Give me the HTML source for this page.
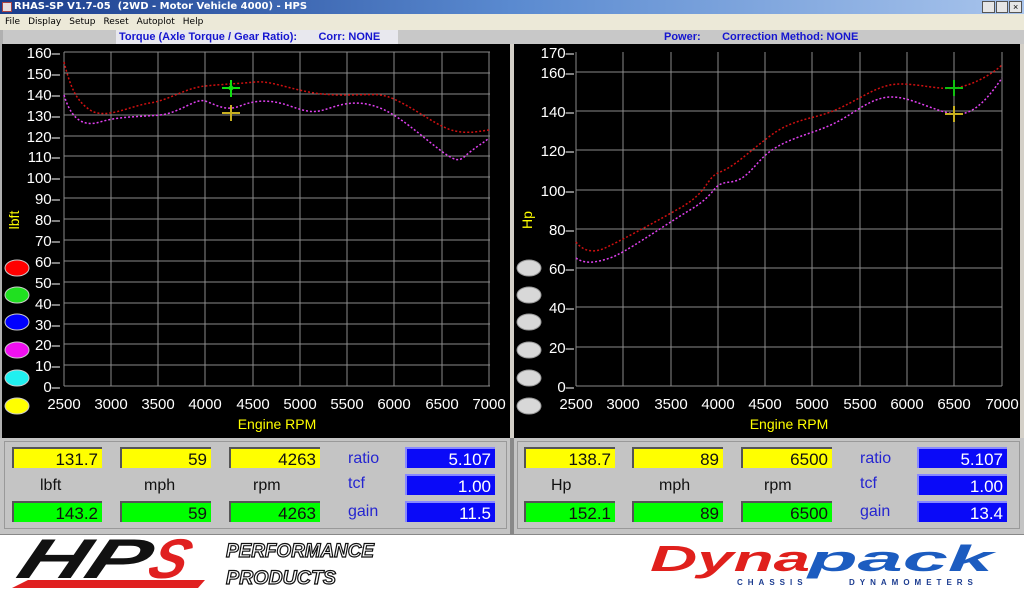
<!DOCTYPE html>
<html><head><meta charset="utf-8"><style>
*{margin:0;padding:0;box-sizing:border-box}
body{width:1024px;height:592px;overflow:hidden;background:#d4d0c8;font-family:"Liberation Sans",sans-serif;position:relative}
.a{position:absolute}
.title{left:0;top:0;width:1024px;height:14px;background:linear-gradient(90deg,#1a3c8c,#5a8ad0 50%,#a8c4ec);color:#fff;font:bold 10px "DejaVu Sans",sans-serif;line-height:14px;padding-left:14px}
.menu{left:0;top:14px;width:1024px;height:16px;background:#ece9d8;font:9px "DejaVu Sans",sans-serif;line-height:16px}
.menu span{margin-left:5px;margin-right:3px}
.hdr{top:30px;height:14px;font:bold 11px "Liberation Sans",sans-serif;color:#1515d0;line-height:14px;background:#e8e8ee;white-space:nowrap}
.box{position:absolute;height:21px;font-size:17px;text-align:right;padding-right:4px;line-height:21px;color:#111;border-top:2px solid #555;border-left:2px solid #555}
.y{background:#ffff00}.g{background:#00ff00}.b{background:#0a0af8;color:#fff;border-color:#88f}
.lb{position:absolute;font-size:16px;color:#111}
.bl{position:absolute;font-size:16px;color:#2525d0}
</style></head><body>
<div class="a title">RHAS-SP V1.7-05 &nbsp;(2WD - Motor Vehicle 4000) - HPS</div>
<div class="a" style="left:2px;top:2px;width:10px;height:10px;background:#e8e0e0;border:1px solid #a44"></div>
<div class="a" style="left:982px;top:1px;width:40px;height:12px;display:flex;gap:1px"><div style="flex:1;background:#e6e6e6;border:1px solid #555"></div><div style="flex:1;background:#e6e6e6;border:1px solid #555"></div><div style="flex:1;background:#e6e6e6;border:1px solid #555;font-size:9px;line-height:10px;text-align:center">×</div></div>
<div class="a menu"><span>File</span><span>Display</span><span>Setup</span><span>Reset</span><span>Autoplot</span><span>Help</span></div>
<div class="a" style="left:0;top:30px;width:1024px;height:14px;background:#c8c8c8"></div>
<div class="a hdr" style="left:116px;width:282px;padding-left:3px">Torque (Axle Torque / Gear Ratio): &nbsp; &nbsp; &nbsp; Corr: NONE</div>
<div class="a hdr" style="left:664px;width:210px;background:none">Power: &nbsp; &nbsp; &nbsp; Correction Method: NONE</div>
<div class="a" style="left:0;top:30px;width:3px;height:410px;background:#b0b0b0"></div>
<svg class="a" style="left:0;top:0" width="1024" height="440" font-family="Liberation Sans" font-size="15">
<rect x="2" y="44" width="508" height="394" fill="#000"/>
<rect x="514" y="44" width="506" height="394" fill="#000"/>
<g stroke="#8a8a8a" stroke-width="1">
<path d="M64 386V52M111 386V52M158 386V52M205 386V52M253 386V52M300 386V52M347 386V52M394 386V52M442 386V52M489 386V52"/>
<path d="M64 52H490M64 73H490M64 94H490M64 115H490M64 136H490M64 156H490M64 177H490M64 198H490M64 219H490M64 240H490M64 261H490M64 282H490M64 303H490M64 324H490M64 344H490M64 365H490M64 386H490"/>
<path d="M576 386V52M623 386V52M671 386V52M718 386V52M765 386V52M812 386V52M860 386V52M907 386V52M954 386V52M1002 386V52"/>
<path d="M576 72H1002M576 111H1002M576 150H1002M576 190H1002M576 229H1002M576 268H1002M576 307H1002M576 347H1002M576 386H1002"/>
</g>
<g fill="#fff" text-anchor="end">
<text x="60" y="58">160–</text><text x="60" y="79">150–</text><text x="60" y="100">140–</text><text x="60" y="121">130–</text><text x="60" y="142">120–</text><text x="60" y="162">110–</text><text x="60" y="183">100–</text><text x="60" y="204">90–</text><text x="60" y="225">80–</text><text x="60" y="246">70–</text><text x="60" y="267">60–</text><text x="60" y="288">50–</text><text x="60" y="309">40–</text><text x="60" y="330">30–</text><text x="60" y="350">20–</text><text x="60" y="371">10–</text><text x="60" y="392">0–</text>
<text x="574" y="58">170–</text><text x="574" y="78">160–</text><text x="574" y="117">140–</text><text x="574" y="156">120–</text><text x="574" y="196">100–</text><text x="574" y="235">80–</text><text x="574" y="274">60–</text><text x="574" y="313">40–</text><text x="574" y="353">20–</text><text x="574" y="392">0–</text>
</g>
<g fill="#fff" text-anchor="middle">
<text x="64" y="409">2500</text><text x="111" y="409">3000</text><text x="158" y="409">3500</text><text x="205" y="409">4000</text><text x="253" y="409">4500</text><text x="300" y="409">5000</text><text x="347" y="409">5500</text><text x="394" y="409">6000</text><text x="442" y="409">6500</text><text x="489" y="409">7000</text>
<text x="576" y="409">2500</text><text x="623" y="409">3000</text><text x="671" y="409">3500</text><text x="718" y="409">4000</text><text x="765" y="409">4500</text><text x="812" y="409">5000</text><text x="860" y="409">5500</text><text x="907" y="409">6000</text><text x="954" y="409">6500</text><text x="1002" y="409">7000</text>
</g>
<g fill="#ffff00" font-size="14" text-anchor="middle">
<text x="277" y="429">Engine RPM</text><text x="789" y="429">Engine RPM</text>
<text transform="translate(19,220) rotate(-90)">lbft</text>
<text transform="translate(532,220) rotate(-90)">Hp</text>
</g>
<g fill="none" stroke-width="1.5" stroke-dasharray="2 2">
<path stroke="#d01010" d="M64 62C70 85 75 100 90 110S130 106 150 103S185 88 205 86S235 84 255 82S300 95 340 95S380 92 400 102S440 128 455 131S480 131 489 130"/>
<path stroke="#e040f0" d="M64 95C70 115 80 128 100 122S140 117 160 115S195 98 205 101S225 112 240 106S270 99 290 106S315 113 330 108S360 100 380 108S420 135 440 150S460 160 470 152S485 142 489 138"/>
<path stroke="#d01010" d="M576 242C582 250 592 254 605 248S650 225 680 208S705 178 720 172S745 155 770 136S815 120 840 108S880 84 900 84S940 90 955 88S990 76 1002 65"/>
<path stroke="#e040f0" d="M576 258C584 264 595 263 610 258S660 228 690 210S710 184 730 182S755 160 775 148S815 133 835 123S870 98 890 97S935 112 955 114S990 95 1002 78"/>
</g>
<g stroke-width="2">
<path stroke="#10e010" d="M231 80V97M222 88H240"/><circle cx="231" cy="88" r="2" fill="none" stroke="#10e010" stroke-width="1"/>
<path stroke="#c8b020" d="M231 105V121M222 113H240"/>
<path stroke="#10c010" d="M954 80V96M945 88H963"/>
<path stroke="#c8b020" d="M954 106V122M945 114H963"/>
</g>
<g stroke="#ccc" stroke-width="1">
<ellipse cx="17" cy="268" rx="12" ry="8" fill="#ff0000"/><ellipse cx="17" cy="295" rx="12" ry="8" fill="#20e020"/><ellipse cx="17" cy="322" rx="12" ry="8" fill="#0000ff"/><ellipse cx="17" cy="350" rx="12" ry="8" fill="#f010f0"/><ellipse cx="17" cy="378" rx="12" ry="8" fill="#20f0f0"/><ellipse cx="17" cy="406" rx="12" ry="8" fill="#ffff00"/>
</g>
<g fill="#d8d8d8" stroke="#999" stroke-width="1">
<ellipse cx="529" cy="268" rx="12" ry="8"/><ellipse cx="529" cy="295" rx="12" ry="8"/><ellipse cx="529" cy="322" rx="12" ry="8"/><ellipse cx="529" cy="350" rx="12" ry="8"/><ellipse cx="529" cy="378" rx="12" ry="8"/><ellipse cx="529" cy="406" rx="12" ry="8"/>
</g>
</svg>
<div class="a" style="left:0;top:438px;width:1024px;height:96px;background:#c4c4c4"></div>
<div class="a" style="left:4px;top:441px;width:503px;height:88px;border:1px solid #999"></div>
<div class="a" style="left:517px;top:441px;width:503px;height:88px;border:1px solid #999"></div>
<div class="a" style="left:510px;top:438px;width:4px;height:96px;background:#888"></div>

<div class="box y" style="left:12px;top:447px;width:90px">131.7</div>
<div class="box y" style="left:120px;top:447px;width:91px">59</div>
<div class="box y" style="left:229px;top:447px;width:91px">4263</div>
<div class="bl" style="left:348px;top:450px">ratio</div>
<div class="box b" style="left:405px;top:447px;width:90px">5.107</div>
<div class="lb" style="left:40px;top:477px">lbft</div>
<div class="lb" style="left:144px;top:477px">mph</div>
<div class="lb" style="left:253px;top:477px">rpm</div>
<div class="bl" style="left:348px;top:475px">tcf</div>
<div class="box b" style="left:405px;top:474px;width:90px">1.00</div>
<div class="box g" style="left:12px;top:501px;width:90px">143.2</div>
<div class="box g" style="left:120px;top:501px;width:91px">59</div>
<div class="box g" style="left:229px;top:501px;width:91px">4263</div>
<div class="bl" style="left:348px;top:503px">gain</div>
<div class="box b" style="left:405px;top:501px;width:90px">11.5</div>

<div class="box y" style="left:524px;top:447px;width:91px">138.7</div>
<div class="box y" style="left:632px;top:447px;width:91px">89</div>
<div class="box y" style="left:741px;top:447px;width:91px">6500</div>
<div class="bl" style="left:860px;top:450px">ratio</div>
<div class="box b" style="left:917px;top:447px;width:90px">5.107</div>
<div class="lb" style="left:551px;top:477px">Hp</div>
<div class="lb" style="left:659px;top:477px">mph</div>
<div class="lb" style="left:764px;top:477px">rpm</div>
<div class="bl" style="left:860px;top:475px">tcf</div>
<div class="box b" style="left:917px;top:474px;width:90px">1.00</div>
<div class="box g" style="left:524px;top:501px;width:91px">152.1</div>
<div class="box g" style="left:632px;top:501px;width:91px">89</div>
<div class="box g" style="left:741px;top:501px;width:91px">6500</div>
<div class="bl" style="left:860px;top:503px">gain</div>
<div class="box b" style="left:917px;top:501px;width:90px">13.4</div>

<div class="a" style="left:0;top:534px;width:1024px;height:58px;background:#fff;border-top:1px solid #888"></div>
<svg class="a" style="left:0;top:534px" width="1024" height="58">
<polygon points="12,54 28,46 205,46 198,54" fill="#e02020"/>
<text x="14" y="44" font-family="Liberation Sans" font-weight="bold" font-style="italic" font-size="56" fill="#111" transform="skewX(-20) translate(16,0)" textLength="130" lengthAdjust="spacingAndGlyphs">HP</text>
<text x="145" y="44" font-family="Liberation Sans" font-weight="bold" font-style="italic" font-size="56" fill="#e02020" transform="skewX(-20) translate(16,0)">S</text>
<g font-family="Liberation Sans" font-weight="bold" font-style="italic" font-size="19" fill="#fff" stroke="#111" stroke-width="1.2">
<text x="226" y="23" textLength="148" lengthAdjust="spacingAndGlyphs">PERFORMANCE</text>
<text x="226" y="50" textLength="110" lengthAdjust="spacingAndGlyphs">PRODUCTS</text>
</g>
<g font-family="Liberation Sans" font-weight="bold" font-style="italic" font-size="36">
<text x="650" y="37" fill="#e0201c" textLength="160" lengthAdjust="spacingAndGlyphs">Dyna</text>
<text x="808" y="37" fill="#1c5cc0" textLength="185" lengthAdjust="spacingAndGlyphs">pack</text>
</g>
<g font-family="Liberation Sans" font-weight="bold" font-size="8" fill="#1c3c90" letter-spacing="5">
<text x="737" y="51">CHASSIS</text><text x="849" y="51">DYNAMOMETERS</text>
</g>
</svg>
</body></html>
